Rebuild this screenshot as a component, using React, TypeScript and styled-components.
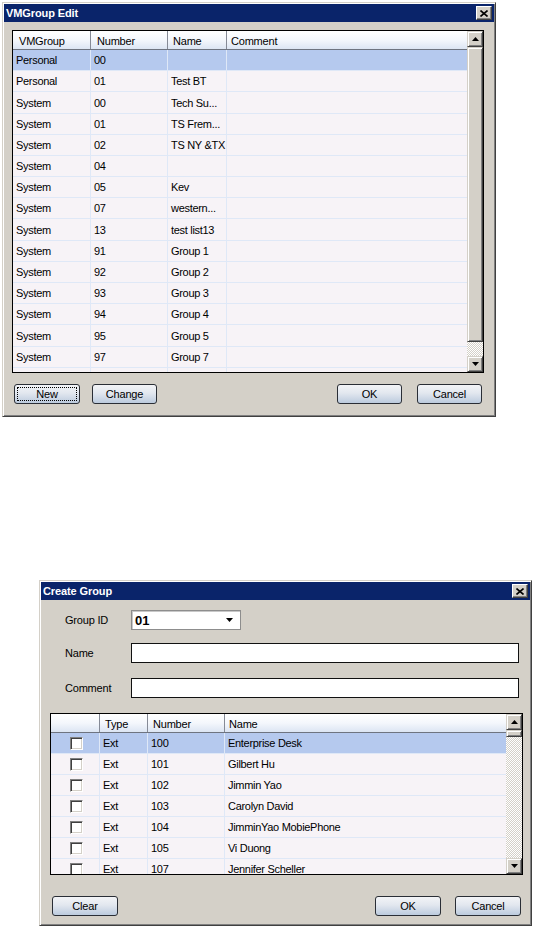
import React from 'react'
import styled, { createGlobalStyle } from 'styled-components'

const GlobalStyle = createGlobalStyle`
  html, body {
    margin: 0;
    padding: 0;
    background: #fff;
  }
  body {
    font-family: "Liberation Sans", Arial, sans-serif;
    font-size: 11px;
    color: #000;
  }
`;

const Page = styled.div`
  box-sizing: border-box;
  width: 534px;
  height: 930px;
  padding: 2px 0 0 2px;
  overflow: hidden;
`;

const Window = styled.div<{ $w: number; $h: number; $ml?: number; $mt?: number }>`
  box-sizing: border-box;
  width: ${p => p.$w}px;
  height: ${p => p.$h}px;
  margin-left: ${p => p.$ml || 0}px;
  margin-top: ${p => p.$mt || 0}px;
  background: #d4d0c8;
  border: 1px solid;
  border-color: #d4d0c8 #404040 #404040 #d4d0c8;
  box-shadow: inset 1px 1px #fff, inset -1px -1px #808080;
  padding: 1px;
  display: flex;
  flex-direction: column;
`;

const TitleBar = styled.div`
  height: 18px;
  background: #0a246a;
  display: flex;
  align-items: center;
  justify-content: space-between;
  padding: 0 2px 0 2px;
`;

const TitleText = styled.span`
  color: #fff;
  font-weight: bold;
  font-size: 11px;
  letter-spacing: -0.1px;
`;

const CloseBtn = styled.div`
  box-sizing: border-box;
  width: 16px;
  height: 14px;
  background: #d4d0c8;
  border: 1px solid;
  border-color: #fff #404040 #404040 #fff;
  box-shadow: inset -1px -1px #808080;
  display: flex;
  align-items: center;
  justify-content: center;
`;

const Body = styled.div<{ $pad: string }>`
  flex: 1;
  display: flex;
  flex-direction: column;
  padding: ${p => p.$pad};
`;

const ListBox = styled.div<{ $h: number }>`
  box-sizing: border-box;
  height: ${p => p.$h}px;
  border: 1px solid #000;
  display: grid;
  grid-template-columns: 1fr 16px;
  background: #f7f3f7;
`;

const Table = styled.div`
  overflow: hidden;
  display: flex;
  flex-direction: column;
`;

const HeaderRow = styled.div<{ $cols: string }>`
  box-sizing: border-box;
  flex: none;
  height: 19px;
  display: grid;
  grid-template-columns: ${p => p.$cols};
  background: linear-gradient(#ffffff 0%, #f4f7fc 50%, #dce5f3 100%);
  border-bottom: 1px solid #6e7480;
`;

const HeaderCell = styled.div<{ $pl?: number }>`
  box-sizing: border-box;
  border-right: 1px solid #858a96;
  padding: 2px 0 0 ${p => p.$pl ?? 5}px;
  line-height: 16px;
  letter-spacing: -0.2px;
  white-space: nowrap;
  overflow: hidden;
  &:last-child {
    border-right: none;
  }
`;

const Row = styled.div<{ $cols: string; $sel?: boolean; $tall?: boolean }>`
  box-sizing: border-box;
  flex: none;
  height: ${p => (p.$tall ? 22 : 21)}px;
  display: grid;
  grid-template-columns: ${p => p.$cols};
  background: ${p => (p.$sel ? '#b5c9ee' : '#f7f3f7')};
  border-bottom: 1px solid #dfe8f7;
`;

const Cell = styled.div<{ $center?: boolean }>`
  box-sizing: border-box;
  border-right: 1px solid #dfe8f7;
  padding-left: 3px;
  letter-spacing: -0.3px;
  white-space: nowrap;
  overflow: hidden;
  display: flex;
  align-items: center;
  justify-content: ${p => (p.$center ? 'center' : 'flex-start')};
  &:last-child {
    border-right: none;
  }
`;

const ScrollBar = styled.div`
  display: flex;
  flex-direction: column;
`;

const bevel = `
  box-sizing: border-box;
  background: #d4d0c8;
  border: 1px solid;
  border-color: #d4d0c8 #404040 #404040 #d4d0c8;
  box-shadow: inset 1px 1px #fff, inset -1px -1px #808080;
`;

const ScrollBtn = styled.div`
  ${bevel}
  flex: none;
  height: 16px;
  display: flex;
  align-items: center;
  justify-content: center;
`;

const Thumb = styled.div<{ $h: number }>`
  ${bevel}
  flex: none;
  height: ${p => p.$h}px;
`;

const Track = styled.div`
  flex: 1;
  background: repeating-conic-gradient(#ffffff 0 25%, #d4d0c8 0 50%) 0 0 / 2px 2px;
`;

const ButtonRow = styled.div<{ $mt: number }>`
  display: flex;
  justify-content: space-between;
  margin-top: ${p => p.$mt}px;
  padding: 0 2px;
`;

const ButtonGroup = styled.div<{ $gap: number }>`
  display: flex;
  gap: ${p => p.$gap}px;
`;

const Button = styled.div<{ $w?: number; $focus?: boolean }>`
  position: relative;
  box-sizing: border-box;
  width: ${p => p.$w || 66}px;
  height: 20px;
  border: 1px solid #2a2e36;
  border-radius: 3px;
  background: linear-gradient(#f3f4f7 0%, #e2e7ef 45%, #bccbde 100%);
  display: flex;
  align-items: center;
  justify-content: center;
  font-size: 11px;
  letter-spacing: -0.2px;
  color: #000;
  ${p =>
    p.$focus
      ? `&::after {
    content: '';
    position: absolute;
    inset: 2px;
    border: 1px dotted #000;
  }`
      : ''}
`;

const Form = styled.div`
  display: grid;
  grid-template-columns: 66px 1fr;
  align-items: center;
  padding-left: 15px;
  padding-right: 4px;
`;

const Label = styled.div<{ $mt?: number }>`
  margin-top: ${p => p.$mt || 0}px;
  letter-spacing: -0.2px;
`;

const Field = styled.div<{ $mt?: number }>`
  margin-top: ${p => p.$mt || 0}px;
`;

const Combo = styled.div`
  box-sizing: border-box;
  width: 110px;
  height: 20px;
  background: #fff;
  border: 1px solid #8d8d8d;
  box-shadow: inset 1px 1px #c8c8c8;
  display: flex;
  align-items: center;
  justify-content: space-between;
  padding: 0 7px 0 3px;
  font-weight: bold;
  font-size: 13px;
`;

const TextInput = styled.div`
  box-sizing: border-box;
  height: 20px;
  background: #fff;
  border: 1px solid #111;
`;

const CheckBox = styled.div`
  box-sizing: border-box;
  width: 13px;
  height: 13px;
  background: #fff;
  border: 1px solid;
  border-color: #808080 #fff #fff #808080;
  box-shadow: inset 1px 1px #404040, inset -1px -1px #d4d0c8;
`;

const ListGap = styled.div<{ $h: number }>`
  height: ${p => p.$h}px;
`;

function CloseIcon() {
  return (
    <svg width="8" height="7" viewBox="0 0 8 7">
      <path d="M0.5 0.5 L7.5 6.5 M7.5 0.5 L0.5 6.5" stroke="#000" strokeWidth="1.6" />
    </svg>
  );
}

function Arrow({ up }: { up?: boolean }) {
  return (
    <svg width="7" height="4" viewBox="0 0 7 4">
      {up ? <path d="M3.5 0 L7 4 L0 4 Z" fill="#000" /> : <path d="M0 0 L7 0 L3.5 4 Z" fill="#000" />}
    </svg>
  );
}

function Title({ text }: { text: string }) {
  return (
    <TitleBar>
      <TitleText>{text}</TitleText>
      <CloseBtn>
        <CloseIcon />
      </CloseBtn>
    </TitleBar>
  );
}

function Scroll({ thumb }: { thumb: number }) {
  return (
    <ScrollBar>
      <ScrollBtn>
        <Arrow up />
      </ScrollBtn>
      <Thumb $h={thumb} />
      <Track />
      <ScrollBtn>
        <Arrow />
      </ScrollBtn>
    </ScrollBar>
  );
}

const groupCols = '78px 77px 59px 1fr';
const groups: [string, string, string][] = [
  ['Personal', '00', ''],
  ['Personal', '01', 'Test BT'],
  ['System', '00', 'Tech Su...'],
  ['System', '01', 'TS Frem...'],
  ['System', '02', 'TS NY &TX'],
  ['System', '04', ''],
  ['System', '05', 'Kev'],
  ['System', '07', 'western...'],
  ['System', '13', 'test list13'],
  ['System', '91', 'Group 1'],
  ['System', '92', 'Group 2'],
  ['System', '93', 'Group 3'],
  ['System', '94', 'Group 4'],
  ['System', '95', 'Group 5'],
  ['System', '97', 'Group 7'],
  ['', '', ''],
];
// the source list is slightly stretched: these rows are a pixel taller
const tallRows = [2, 8, 13];

const memberCols = '49px 48px 77px 1fr';
const members: [string, string, string][] = [
  ['Ext', '100', 'Enterprise Desk'],
  ['Ext', '101', 'Gilbert Hu'],
  ['Ext', '102', 'Jimmin Yao'],
  ['Ext', '103', 'Carolyn David'],
  ['Ext', '104', 'JimminYao MobiePhone'],
  ['Ext', '105', 'Vi Duong'],
  ['Ext', '107', 'Jennifer Scheller'],
];

function VMGroupEdit() {
  return (
    <Window $w={494} $h={415}>
      <Title text="VMGroup Edit" />
      <Body $pad="8px 10px 0 8px">
        <ListBox $h={343}>
          <Table>
            <HeaderRow $cols={groupCols}>
              <HeaderCell $pl={6}>VMGroup</HeaderCell>
              <HeaderCell $pl={6}>Number</HeaderCell>
              <HeaderCell>Name</HeaderCell>
              <HeaderCell $pl={4}>Comment</HeaderCell>
            </HeaderRow>
            {groups.map((g, i) => (
              <Row key={i} $cols={groupCols} $sel={i === 0} $tall={tallRows.includes(i)}>
                <Cell>{g[0]}</Cell>
                <Cell>{g[1]}</Cell>
                <Cell>{g[2]}</Cell>
                <Cell />
              </Row>
            ))}
          </Table>
          <Scroll thumb={295} />
        </ListBox>
        <ButtonRow $mt={11}>
          <ButtonGroup $gap={12}>
            <Button $focus>New</Button>
            <Button $w={65}>Change</Button>
          </ButtonGroup>
          <ButtonGroup $gap={15}>
            <Button $w={65}>OK</Button>
            <Button $w={65}>Cancel</Button>
          </ButtonGroup>
        </ButtonRow>
      </Body>
    </Window>
  );
}

function CreateGroup() {
  return (
    <Window $w={493} $h={346} $ml={37} $mt={163}>
      <Title text="Create Group" />
      <Body $pad="10px 7px 0 9px">
        <Form>
          <Label>Group ID</Label>
          <Field>
            <Combo>
              <span>01</span>
              <Arrow />
            </Combo>
          </Field>
          <Label $mt={13}>Name</Label>
          <Field $mt={13}>
            <TextInput />
          </Field>
          <Label $mt={15}>Comment</Label>
          <Field $mt={15}>
            <TextInput />
          </Field>
        </Form>
        <ListGap $h={15} />
        <ListBox $h={162}>
          <Table>
            <HeaderRow $cols={memberCols}>
              <HeaderCell />
              <HeaderCell>Type</HeaderCell>
              <HeaderCell>Number</HeaderCell>
              <HeaderCell $pl={4}>Name</HeaderCell>
            </HeaderRow>
            {members.map((m, i) => (
              <Row key={i} $cols={memberCols} $sel={i === 0}>
                <Cell $center>
                  <CheckBox />
                </Cell>
                <Cell>{m[0]}</Cell>
                <Cell>{m[1]}</Cell>
                <Cell>{m[2]}</Cell>
              </Row>
            ))}
          </Table>
          <Scroll thumb={7} />
        </ListBox>
        <ButtonRow $mt={21}>
          <ButtonGroup $gap={12}>
            <Button>Clear</Button>
          </ButtonGroup>
          <ButtonGroup $gap={14}>
            <Button>OK</Button>
            <Button>Cancel</Button>
          </ButtonGroup>
        </ButtonRow>
      </Body>
    </Window>
  );
}

export default function App() {
  return (
    <>
      <GlobalStyle />
      <Page>
        <VMGroupEdit />
        <CreateGroup />
      </Page>
    </>
  );
}
